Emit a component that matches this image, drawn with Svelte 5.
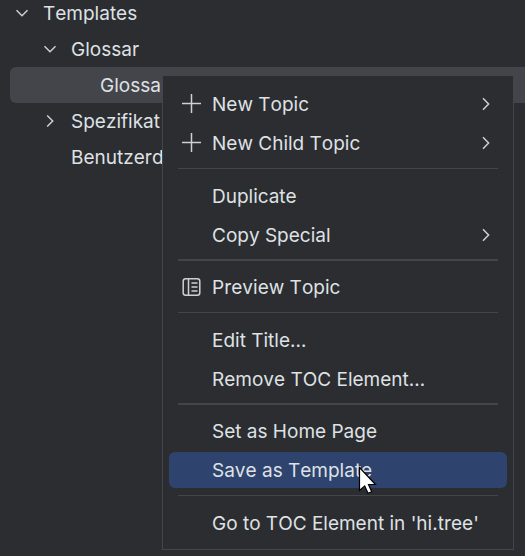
<script>
  const tree = [
    { label: 'Templates', level: 0, state: 'open' },
    { label: 'Glossar', level: 1, state: 'open' },
    { label: 'Glossar', level: 2, state: 'leaf', selected: true },
    { label: 'Spezifikat', level: 1, state: 'closed' },
    { label: 'Benutzerd', level: 1, state: 'leaf' }
  ];

  const groups = [
    [
      { label: 'New Topic', icon: 'plus', sub: true },
      { label: 'New Child Topic', icon: 'plus', sub: true }
    ],
    [{ label: 'Duplicate' }, { label: 'Copy Special', sub: true }],
    [{ label: 'Preview Topic', icon: 'preview' }],
    [{ label: 'Edit Title…' }, { label: 'Remove TOC Element…' }],
    [{ label: 'Set as Home Page' }, { label: 'Save as Template', active: true }],
    [{ label: "Go to TOC Element in 'hi.tree'" }]
  ];
</script>

<main>
  <ul class="tree" role="tree">
    {#each tree as node}
      <li
        class="node level{node.level}"
        class:selected={node.selected}
        role="treeitem"
        aria-selected={node.selected ?? false}
      >
        <span class="twisty">
          {#if node.state === 'open'}
            <svg width="14" height="14" viewBox="0 0 14 14"><path d="M1.5 4.2 7 9.7l5.5-5.5" /></svg>
          {:else if node.state === 'closed'}
            <svg width="14" height="14" viewBox="0 0 14 14"><path d="M4.2 1.5 9.7 7l-5.5 5.5" /></svg>
          {/if}
        </span>
        <span class="label">{node.label}</span>
      </li>
    {/each}
  </ul>

  <div class="menu" role="menu">
    {#each groups as group, i}
      {#if i > 0}
        <hr class:thick={i % 2 === 0} />
      {/if}
      {#each group as item}
        <button class="item" class:active={item.active} role="menuitem">
          <span class="icon">
            {#if item.icon === 'plus'}
              <svg width="20" height="20" viewBox="0 0 20 20"><path d="M10.5 0v19M1 9.5h19" /></svg>
            {:else if item.icon === 'preview'}
              <svg width="20" height="20" viewBox="0 0 20 20">
                <rect x="2.2" y="1.7" width="16.6" height="16.6" rx="2.5" />
                <path d="M7.5 2v16M10.5 6h6M10.5 10h6M10.5 14h6" />
              </svg>
            {/if}
          </span>
          <span class="label">{item.label}</span>
          {#if item.sub}
            <svg width="14" height="14" viewBox="0 0 14 14"><path d="M4 1.2 9.6 7 4 12.8" /></svg>
          {/if}
        </button>
      {/each}
    {/each}
  </div>

  <svg class="cursor" width="20" height="30" viewBox="0 0 20 30">
    <path d="M1.5 1.5v23l5.2-4.6 3.3 7.4 3.7-1.6-3.2-7.2h7z" />
  </svg>
</main>

<style>
  :global(body) {
    margin: 0;
    background: #2b2d30;
  }

  main {
    position: relative;
    min-height: 100vh;
    overflow: hidden;
    color: #dfe1e5;
    font: 19px/24px Inter, 'Noto Sans', sans-serif;
    font-kerning: none;
  }

  .tree {
    list-style: none;
    margin: -5px 0 0;
    padding: 0 0 0 10px;
  }

  .node {
    display: flex;
    align-items: center;
    height: 36px;
    gap: 14px;
    white-space: nowrap;
  }

  .level0 {
    padding-left: 5px;
  }

  .level1 {
    padding-left: 33px;
  }

  .level2 {
    padding-left: 62px;
  }

  .selected {
    background: #43454a;
    border-radius: 6px 0 0 6px;
  }

  .twisty {
    display: flex;
    width: 14px;
  }

  svg {
    flex: none;
    fill: none;
    stroke: #ced0d6;
    stroke-width: 1.5;
  }

  .menu {
    position: absolute;
    top: 75px;
    left: 162px;
    right: 11px;
    display: flex;
    flex-direction: column;
    box-sizing: border-box;
    padding: 8px 6px 7px;
    border: 1px solid #43454a;
    background: #2b2d30;
  }

  hr {
    flex: none;
    height: 1px;
    margin: 6px 9px 7px;
    border: 0;
    background: #43454a;
  }

  hr.thick {
    height: 2px;
    margin: 5px 9px 6px;
  }

  .item {
    display: flex;
    align-items: center;
    box-sizing: border-box;
    height: 36px;
    margin: 2px 0 1px;
    padding: 0 14px 0 12px;
    border: 0;
    border-radius: 6px;
    background: none;
    color: inherit;
    font: inherit;
    font-kerning: inherit;
    text-align: left;
    white-space: nowrap;
  }

  .active {
    background: #2e436e;
  }

  .icon {
    display: flex;
    width: 20px;
    margin-right: 11px;
  }

  .label {
    flex: 1;
    padding-top: 2px;
  }

  .cursor {
    position: absolute;
    top: 466px;
    left: 358px;
  }

  .cursor path {
    fill: #fff;
    stroke: #000;
    stroke-width: 1.2;
  }
</style>
